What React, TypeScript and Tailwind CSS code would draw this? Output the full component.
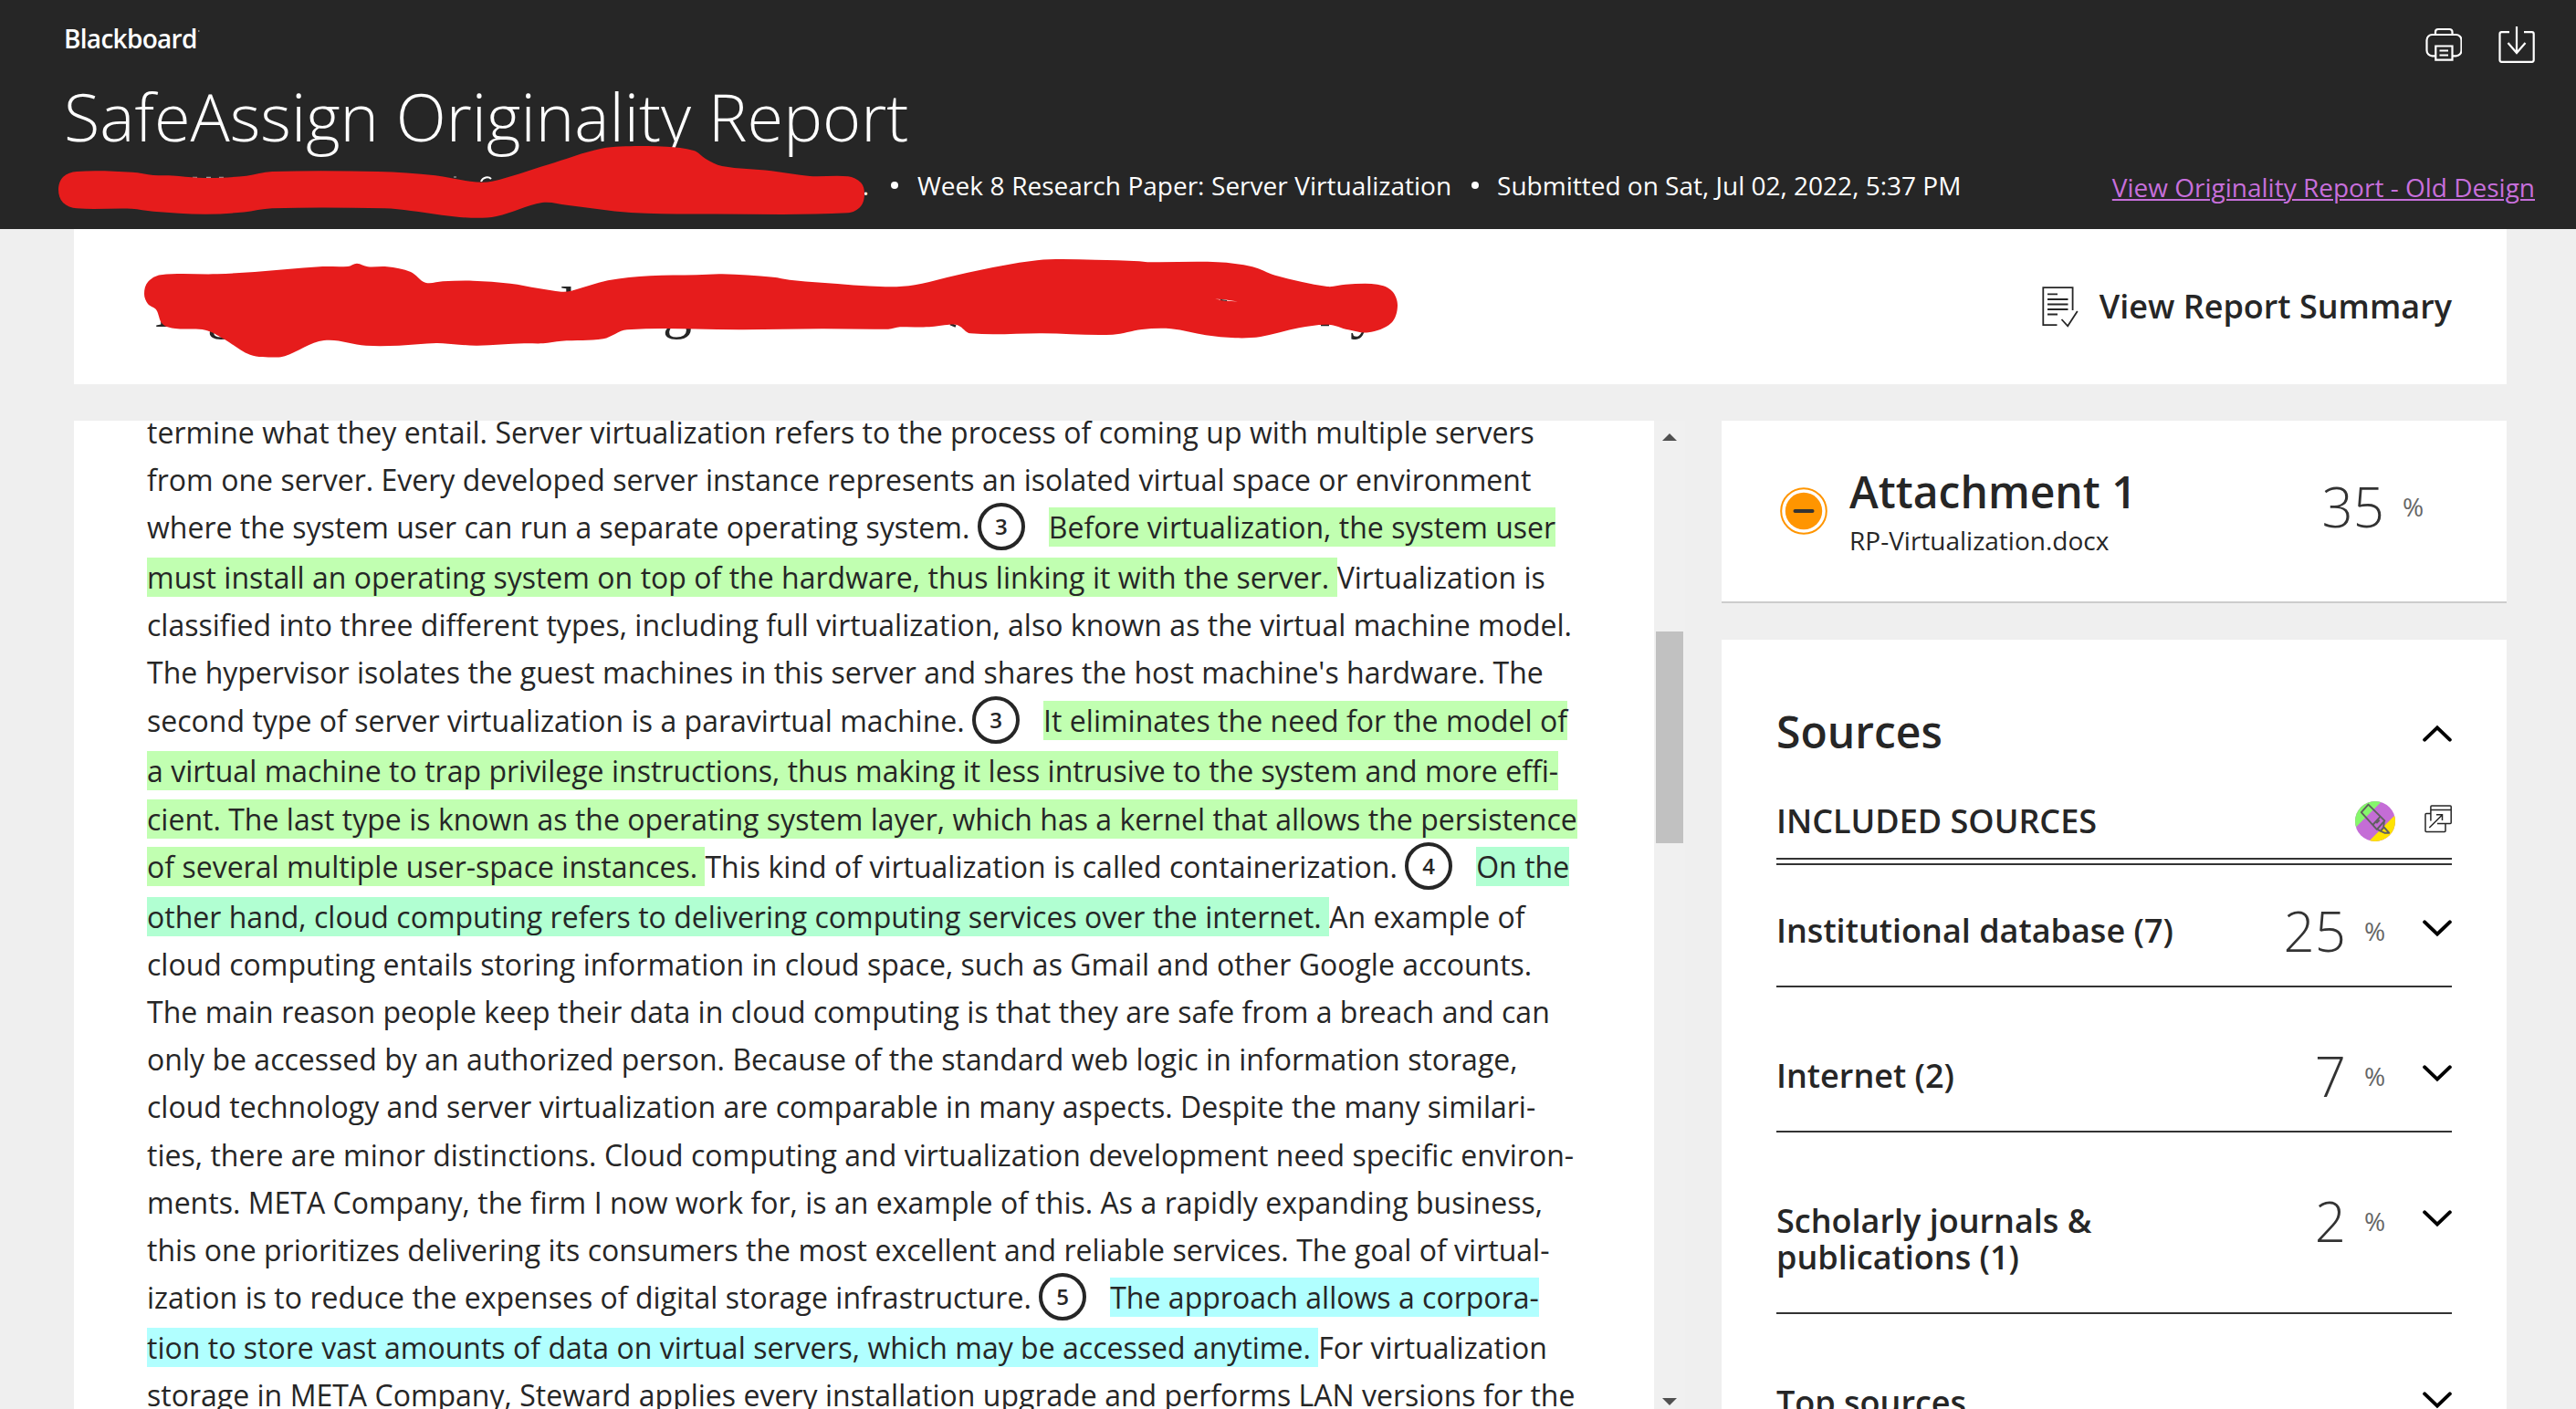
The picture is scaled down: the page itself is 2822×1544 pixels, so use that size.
import type { ReactNode } from "react";

type Segment = { text?: string; mark?: "3" | "4" | "5"; badge?: string };

type Line = { size: "normal" | "wide" | "tall"; parts: Segment[] };

const MARKS = {
    "3": "bg-[#c1ffb1]",
    "4": "bg-[#b1ffd2]",
    "5": "bg-[#b1ffff]",
};

const LINE_HEIGHTS = {
    normal: "h-[52px]",
    wide: "h-[53px]",
    tall: "h-[55px]",
};

const plain = (text: string, size: Line["size"] = "normal"): Line => ({ size, parts: [{ text }] });

const lines: Line[] = [
    plain("termine what they entail. Server virtualization refers to the process of coming up with multiple servers"),
    plain("from one server. Every developed server instance represents an isolated virtual space or environment"),
    {
        size: "tall",
        parts: [
            { text: "where the system user can run a separate operating system. " },
            { badge: "3" },
            { text: "Before virtualization, the system user", mark: "3" },
        ],
    },
    {
        size: "normal",
        parts: [
            { text: "must install an operating system on top of the hardware, thus linking it with the server. ", mark: "3" },
            { text: "Virtualization is" },
        ],
    },
    plain("classified into three different types, including full virtualization, also known as the virtual machine model."),
    plain("The hypervisor isolates the guest machines in this server and shares the host machine's hardware. The", "wide"),
    {
        size: "tall",
        parts: [
            { text: "second type of server virtualization is a paravirtual machine. " },
            { badge: "3" },
            { text: "It eliminates the need for the model of", mark: "3" },
        ],
    },
    {
        size: "wide",
        parts: [{ text: "a virtual machine to trap privilege instructions, thus making it less intrusive to the system and more effi-", mark: "3" }],
    },
    {
        size: "normal",
        parts: [{ text: "cient. The last type is known as the operating system layer, which has a kernel that allows the persistence", mark: "3" }],
    },
    {
        size: "tall",
        parts: [
            { text: "of several multiple user-space instances. ", mark: "3" },
            { text: "This kind of virtualization is called containerization. " },
            { badge: "4" },
            { text: "On the", mark: "4" },
        ],
    },
    {
        size: "normal",
        parts: [
            { text: "other hand, cloud computing refers to delivering computing services over the internet. ", mark: "4" },
            { text: "An example of" },
        ],
    },
    plain("cloud computing entails storing information in cloud space, such as Gmail and other Google accounts."),
    plain("The main reason people keep their data in cloud computing is that they are safe from a breach and can"),
    plain("only be accessed by an authorized person. Because of the standard web logic in information storage,"),
    plain("cloud technology and server virtualization are comparable in many aspects. Despite the many similari-", "wide"),
    plain("ties, there are minor distinctions. Cloud computing and virtualization development need specific environ-"),
    plain("ments. META Company, the firm I now work for, is an example of this. As a rapidly expanding business,"),
    plain("this one prioritizes delivering its consumers the most excellent and reliable services. The goal of virtual-"),
    {
        size: "tall",
        parts: [
            { text: "ization is to reduce the expenses of digital storage infrastructure. " },
            { badge: "5" },
            { text: "The approach allows a corpora-", mark: "5" },
        ],
    },
    {
        size: "normal",
        parts: [
            { text: "tion to store vast amounts of data on virtual servers, which may be accessed anytime. ", mark: "5" },
            { text: "For virtualization" },
        ],
    },
    plain("storage in META Company, Steward applies every installation upgrade and performs LAN versions for the"),
];

const sources = [
    { label: "Institutional database (7)", value: "25" },
    { label: "Internet (2)", value: "7" },
    { label: "Scholarly journals & publications (1)", value: "2" },
    { label: "Top sources", value: "" },
];

type Point = [number, number];

const headerStroke: Point[] = [
    [64, 208], [69, 194], [84, 188], [145, 188.7], [168, 192], [189, 192.5], [217, 194.7], [242, 194.7], [270, 192.7],
    [298, 188], [414, 188], [477, 192.3], [515, 198.7], [539, 198.7], [600, 180.5], [659, 162.7], [701, 160], [730, 160.7],
    [760, 165], [773, 174], [791, 182], [845, 187.3], [887, 193], [929, 193.3], [943, 200], [947, 212], [943, 226],
    [929, 233.3], [782, 234.5], [691, 233], [621, 224.7], [594, 222], [544, 237], [516, 238.7], [484, 235.7], [450, 231],
    [421, 228.3], [298, 228.3], [267, 232.5], [224, 234.7], [168, 231.7], [144, 228.7], [84, 228.3], [69, 222],
];

const titleStroke: Point[] = [
    [158, 322], [162, 309], [176, 301.3], [238, 300.3], [279, 298], [350, 292.3], [381, 292], [391, 288.7], [403, 292.3],
    [424, 292.3], [450, 298], [466, 309.7], [485, 308.3], [518, 307.7], [559, 310.7], [590, 316], [615, 319.7],
    [626, 318.7], [666, 307.3], [712, 302.3], [763, 301.3], [791, 300.3], [847, 303.7], [865, 306.7], [900, 309.7],
    [970, 314.3], [1002, 312.3], [1059, 299], [1136, 285.3], [1200, 284.7], [1248, 286.3], [1257, 287.3], [1334, 287.3],
    [1372, 292.3], [1397, 301.7], [1454, 314], [1474, 311.7], [1509, 311.7], [1525, 319], [1531, 335], [1524, 354],
    [1499, 364.3], [1477, 361.3], [1455, 355.7], [1423, 359.3], [1381, 369], [1353, 370.3], [1321, 367.3],
    [1283, 360.3], [1251, 361], [1219, 366.7], [1142, 365.3], [1063, 365.3], [1050, 356.7], [1040, 355.7], [1018, 358.3],
    [986, 358.3], [973, 360.7], [900, 360.3], [814, 361.3], [687, 361.3], [661, 371.3], [615, 373.7], [595, 376.3],
    [574, 376.3], [523, 378.7], [503, 377.7], [478, 376], [437, 378.7], [401, 378.7], [355, 373], [312, 390.3],
    [301, 391.5], [274, 388.7], [245, 371.3], [225, 361.7], [192, 360], [178, 355], [171, 339.3], [162, 333],
];

// Closed curve through every point
function smoothPath(points: Point[]) {
    const n = points.length;
    let d = `M${points[0][0]} ${points[0][1]}`;
    for (let i = 0; i < n; i++) {
        const p0 = points[(i + n - 1) % n];
        const p1 = points[i];
        const p2 = points[(i + 1) % n];
        const p3 = points[(i + 2) % n];
        const len = Math.hypot(p2[0] - p1[0], p2[1] - p1[1]);
        const a = len / (Math.hypot(p2[0] - p0[0], p2[1] - p0[1]) || 1) / 3;
        const b = len / (Math.hypot(p3[0] - p1[0], p3[1] - p1[1]) || 1) / 3;
        d += `C${p1[0] + (p2[0] - p0[0]) * a} ${p1[1] + (p2[1] - p0[1]) * a} ${p2[0] - (p3[0] - p1[0]) * b} ${p2[1] - (p3[1] - p1[1]) * b} ${p2[0]} ${p2[1]}`;
    }
    return d + "Z";
}

function Chevron({ up = false }: { up?: boolean }) {
    return (
        <svg className="h-5 w-8 shrink-0" viewBox="0 0 32 20" fill="none" stroke="#000" strokeWidth="4" strokeLinecap="round">
            <path d={up ? "M2.2 16.6 16 3.4l13.8 13.2" : "M2.2 3.4 16 16.6 29.8 3.4"} />
        </svg>
    );
}

function PrintIcon() {
    return (
        <svg className="h-10 w-10" viewBox="0 0 40 40" fill="none" stroke="#fff" strokeWidth="2.2">
            <path d="M11 9V6a3 3 0 0 1 3-3h12.500a3 3 0 0 1 3 3v3" />
            <path d="M11 32.300H7.500a6 6 0 0 1-6-6V15a6 6 0 0 1 6-6h26a6 6 0 0 1 6 6v11.300a6 6 0 0 1-6 6H30" />
            <path d="M11.300 21.500h18.200v15.200H11.300zM15.500 26.500h9.500M15.500 31.500h9.500" />
        </svg>
    );
}

function DownloadIcon() {
    return (
        <svg className="h-10 w-10" viewBox="0 0 40 40" fill="none" stroke="#fff" strokeWidth="2.2">
            <path d="M12 6.200H3.500a2 2 0 0 0-2 2v28.600a2 2 0 0 0 2 2h33.200a2 2 0 0 0 2-2V8.200a2 2 0 0 0-2-2H28" />
            <path d="M20 0v29M10.500 18 20 29l9.500-11" />
        </svg>
    );
}

function SummaryIcon() {
    return (
        <svg className="h-[45px] w-10" viewBox="0 0 40 45" fill="none" stroke="#262626" strokeWidth="1.800">
            <path d="M16.500 42.200H1.300V1.200h32.300v24.800" />
            <path d="M6 8.300h11M6 14h22.500M6 19.500h22.500M6 25h22.500M6 30.500h11" />
            <path d="m21.500 36 6.700 7.300L38.800 27" />
        </svg>
    );
}

function HighlighterIcon() {
    return (
        <svg className="h-11 w-11" viewBox="0 0 44 44">
            <clipPath id="disc">
                <circle cx="22" cy="22" r="22" />
            </clipPath>
            <g clipPath="url(#disc)">
                <path d="M0 0h44v44H0z" fill="#c46dd6" />
                <path d="M0 0h29.300L0 29.300z" fill="#85f76b" />
                <path d="M44 15v29H15z" fill="#ffe300" />
            </g>
            <g fill="none" stroke="#5f5f5f" strokeWidth="1.900" strokeLinejoin="round">
                <path d="M14.500 3.600 6.800 12.200 23.800 30.800l8.600-9.400z" />
                <path d="m19.300 26 8-8.800M23.300 24.200l3.400-3.500" />
                <path d="m31.800 22.500-.6 5.500 6 6.700h-5l-5-2.200-3-2M32 28l-4 4.500" />
            </g>
        </svg>
    );
}

function OpenIcon() {
    return (
        <svg className="h-[31px] w-[30px]" viewBox="0 0 30 31" fill="none" stroke="#262626" strokeWidth="1.500">
            <path d="M7 9.400H2a1 1 0 0 0-1 1v18.200a1 1 0 0 0 1 1h20a1 1 0 0 0 1-1v-7.800" />
            <path d="M6.900 17.500V1.900a1 1 0 0 1 1-1h20.300a1 1 0 0 1 1 1v17.700a1 1 0 0 1-1 1H14M6.900 5.500h22.300" />
            <path d="M5.300 25 19.400 11M13 10.800h6.500V17" />
        </svg>
    );
}

function Percent({ value }: { value: string }) {
    return (
        <div className="flex items-start gap-5">
            <span className="text-[60px] leading-none font-light text-[#333]">{value}</span>
            <span className="mt-4 w-[23px] text-[28px] leading-none text-[#666]">%</span>
        </div>
    );
}

function Badge({ children }: { children: ReactNode }) {
    return (
        <span className="-mt-px mr-[26px] flex h-[52px] w-[52px] shrink-0 items-center justify-center rounded-full border-4 border-[#262626] text-[24px] leading-none font-semibold">
            {children}
        </span>
    );
}

function Header() {
    return (
        <header className="relative flex h-[251px] shrink-0 justify-between bg-[#262626] text-white">
            <div className="pt-7 pl-[70px]">
                <div className="text-[28px] leading-none font-semibold tracking-[-0.7px]">
                    Blackboard
                </div>
                <h1 className="mt-[35px] text-[72px] leading-none font-light">SafeAssign Originality Report</h1>
                <div className="mt-[26px] flex items-center text-[28px] leading-none">
                    <span className="w-[882px] text-right">.</span>
                    <i className="mr-[21px] ml-6 h-2 w-2 rounded-full bg-white" />
                    <span className="[word-spacing:0.3px]">Week 8 Research Paper: Server Virtualization</span>
                    <i className="mr-5 ml-[22px] h-2 w-2 rounded-full bg-white" />
                    <span>Submitted on Sat, Jul 02, 2022, 5:37 PM</span>
                </div>
            </div>
            <div className="flex flex-col items-end pt-[29px] pr-[45px]">
                <div className="flex gap-10">
                    <PrintIcon />
                    <DownloadIcon />
                </div>
                <a className="mt-[122px] text-[28px] leading-none text-[#c76fdb] underline decoration-2 underline-offset-2">
                    View Originality Report - Old Design
                </a>
            </div>
            <svg className="absolute top-0 left-0 h-[251px] w-[1000px]" viewBox="0 0 1000 251">
                <path d="M211 194.300h5M226 194.300h5M240 194.300h5M497 194h3" stroke="#bbb" />
                <path d="M527 199c2-5 8-6 11-3" fill="none" stroke="#fff" strokeWidth="2" />
                <path d="M217 34h1.500" stroke="#aaa" strokeWidth="1.500" />
                <path d={smoothPath(headerStroke)} fill="#e61c1c" />
            </svg>
        </header>
    );
}

function TitleBar() {
    return (
        <section className="relative mx-[81px] mr-[76px] flex h-[170px] shrink-0 items-start justify-end bg-white pr-[60px]">
            <div className="mt-[63px] flex">
                <SummaryIcon />
                <span className="mt-1 ml-[23px] text-[36px] leading-none font-semibold">View Report Summary</span>
            </div>
            <div className="absolute top-[54px] left-0 font-['Liberation_Serif'] text-[64px] leading-none">
                <span className="absolute left-[88px]">P</span>
                <span className="absolute left-[146px]">g</span>
                <span className="absolute left-[533px]">l</span>
                <span className="absolute left-[645px]">g</span>
                <span className="absolute left-[1398px]">y</span>
            </div>
            <svg className="absolute top-0 left-0 h-[170px] w-[1500px]" viewBox="81 251 1500 170">
                <path d="m1041 355 6 2.500M1447 356h9" stroke="#262626" strokeWidth="2.500" />
                <path d={smoothPath(titleStroke)} fill="#e61c1c" />
                <path d="m1331 327.500 12 1 13 2-14-1z" fill="#fff" />
                <path d="m1337 328.500 7 1" stroke="#262626" strokeWidth="1.200" />
            </svg>
        </section>
    );
}

function Scrollbar() {
    return (
        <div className="flex w-[34px] shrink-0 flex-col items-center bg-[#f0f0f0] pt-[14px]">
            <svg className="h-2 w-4" viewBox="0 0 16 8" fill="#505050">
                <path d="M8 0l8 8H0z" />
            </svg>
            <div className="mt-[209px] h-[232px] w-[30px] bg-[#c1c1c1]" />
            <svg className="mt-[608px] h-2 w-4" viewBox="0 0 16 8" fill="#505050">
                <path d="M0 0h16L8 8z" />
            </svg>
        </div>
    );
}

function Document() {
    return (
        <section className="flex h-[1083px] w-[1765px] shrink-0 overflow-hidden">
            <div className="w-[1731px] overflow-hidden bg-white pl-20">
                <div className="-mt-[13px] text-[32px] leading-[52px] [word-spacing:0.1px]">
                    {lines.map((line, i) => (
                        <div key={i} className={`flex items-start whitespace-pre ${LINE_HEIGHTS[line.size]}`}>
                            {line.parts.map((part, j) =>
                                part.badge ? (
                                    <Badge key={j}>{part.badge}</Badge>
                                ) : (
                                    <span key={j}>
                                        <span className={part.mark && MARKS[part.mark]}>{part.text}</span>
                                    </span>
                                )
                            )}
                        </div>
                    ))}
                </div>
            </div>
            <Scrollbar />
        </section>
    );
}

function AttachmentCard() {
    return (
        <section className="flex h-[200px] shrink-0 items-start border-b-2 border-[#ccc] bg-white pr-[91px] pl-16">
            <svg className="mt-[73px] h-[52px] w-[52px]" viewBox="0 0 52 52">
                <circle cx="26" cy="26" r="24.800" fill="none" stroke="#ff9500" strokeWidth="2" />
                <circle cx="26" cy="26" r="20.200" fill="#ff9500" />
                <path d="M16.500 26h19" stroke="#333" strokeWidth="4" strokeLinecap="round" />
            </svg>
            <div className="mt-[54px] ml-6 flex-1">
                <h2 className="text-[48px] leading-none font-semibold">Attachment 1</h2>
                <p className="mt-[15px] text-[28px] leading-none">RP-Virtualization.docx</p>
            </div>
            <div className="mt-16">
                <Percent value="35" />
            </div>
        </section>
    );
}

function SourcesCard() {
    return (
        <section className="mt-10 flex-1 bg-white px-[60px] pt-[77px]">
            <div className="flex items-start justify-between">
                <h2 className="text-[48px] leading-none font-semibold">Sources</h2>
                <div className="mt-4">
                    <Chevron up />
                </div>
            </div>
            <div className="mt-[52px] flex h-[62px] items-start">
                <h3 className="mt-1 flex-1 text-[36px] leading-none font-semibold">INCLUDED SOURCES</h3>
                <HighlighterIcon />
                <div className="mt-1 ml-8">
                    <OpenIcon />
                </div>
            </div>
            <div className="h-2 border-y-2 border-[#333]" />
            <div className="-mt-[25px]">
                {sources.map((source) => (
                    <div key={source.label} className="flex items-start border-b-2 border-[#333] pt-[77px] pb-10">
                        <h4 className="w-[440px] text-[36px] leading-10 font-semibold">{source.label}</h4>
                        <div className="-mt-[10px] ml-auto h-10">{source.value && <Percent value={source.value} />}</div>
                        <div className="mt-[7px] ml-[41px]">
                            <Chevron />
                        </div>
                    </div>
                ))}
            </div>
        </section>
    );
}

export default function App() {
    return (
        <div className="flex h-[1544px] w-[2822px] flex-col overflow-hidden bg-[#efefef] font-['Open_Sans',sans-serif] text-[#262626]">
            <Header />
            <TitleBar />
            <main className="mt-10 flex h-[1083px] shrink-0 overflow-hidden pl-[81px]">
                <Document />
                <aside className="ml-10 flex h-[1083px] w-[860px] shrink-0 flex-col overflow-hidden">
                    <AttachmentCard />
                    <SourcesCard />
                </aside>
            </main>
        </div>
    );
}
